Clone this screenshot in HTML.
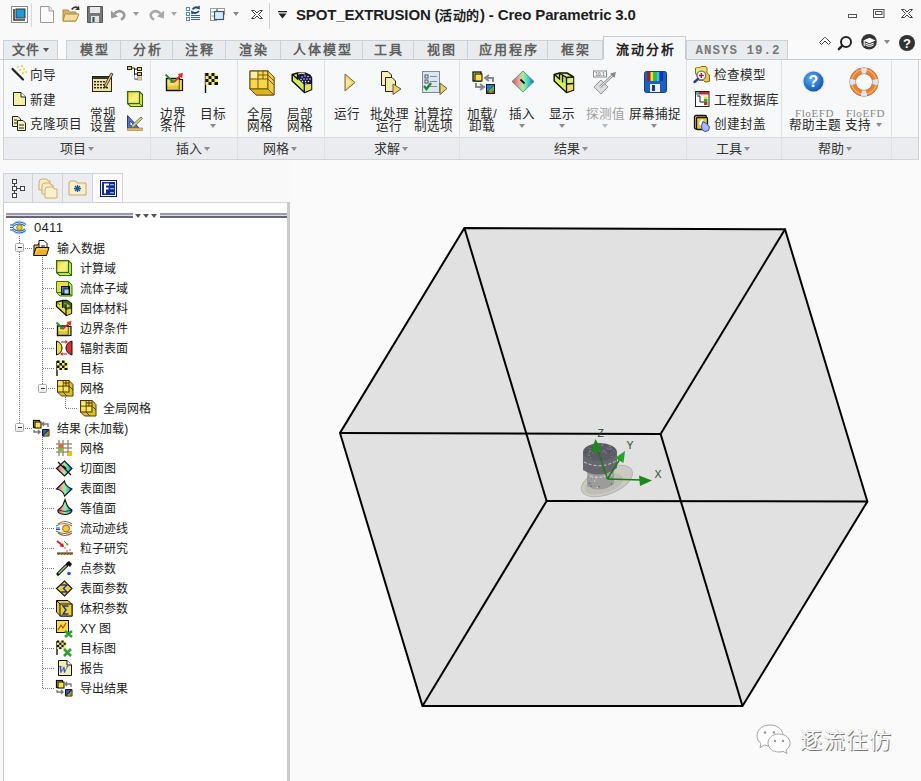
<!DOCTYPE html>
<html lang="zh-CN"><head><meta charset="utf-8">
<style>
*{margin:0;padding:0;box-sizing:border-box}
html,body{width:921px;height:781px;overflow:hidden;background:#fafafa;font-family:"Liberation Sans",sans-serif;font-size:12px;color:#222}
.a{position:absolute}
svg{position:absolute;overflow:visible}
.tab{position:absolute;top:40px;height:19px;border:1px solid #cdd0d4;border-bottom:none;background:#e9ecef;color:#606060;font-weight:bold;font-size:13px;text-align:center;line-height:18px;letter-spacing:2px;text-indent:2px}
.gl{position:absolute;top:142px;height:14px;line-height:14px;font-size:13px;color:#333;white-space:nowrap}
.dd{display:inline-block;width:0;height:0;border-left:3.5px solid transparent;border-right:3.5px solid transparent;border-top:4px solid #8c8c8c;vertical-align:middle;margin-left:2px;position:relative;top:-1px}
.vs{position:absolute;width:1px;background:#dfe2e5}
.t{position:absolute;white-space:nowrap;font-size:12.6px;color:#2a2a2a;line-height:12px}
.c2{text-align:center;line-height:12px}
.tr{position:absolute;white-space:nowrap;font-size:12px;color:#222;line-height:14px}
.dotv{position:absolute;width:1px;background:repeating-linear-gradient(to bottom,#7a7a7a 0 1px,transparent 1px 2px)}
.doth{position:absolute;height:1px;background:repeating-linear-gradient(to right,#7a7a7a 0 1px,transparent 1px 2px)}
.ar{position:absolute;width:0;height:0;border-left:3.5px solid transparent;border-right:3.5px solid transparent;border-top:4px solid #888}
.box{position:absolute;width:9px;height:9px;border:1px solid #a8a8a8;border-radius:1.5px;background:linear-gradient(#fff,#e8e8e8);z-index:2}
.box:after{content:"";position:absolute;left:1.5px;top:3px;width:4px;height:1px;background:#333}
</style></head><body>

<!-- title bar -->
<div class="a" style="left:0;top:0;width:921px;height:40px;background:#f9f9fa"></div>
<div class="a" style="left:296px;top:6px;font-size:15px;font-weight:bold;color:#1e1e24;line-height:18px;white-space:nowrap;letter-spacing:-0.15px">SPOT_EXTRUSION (<span style="font-size:13px;letter-spacing:0.5px">活动的</span>) - Creo Parametric 3.0</div>

<!-- tabs -->
<div class="a" style="left:0;top:59px;width:921px;height:1px;background:#c6c9cd"></div>
<div class="tab" style="left:3px;width:55px;letter-spacing:1px;text-indent:-1px">文件<span class="dd" style="border-top-color:#555;margin-left:3px"></span></div>
<div class="tab" style="left:66px;width:55px">模型</div>
<div class="tab" style="left:120px;width:53px">分析</div>
<div class="tab" style="left:172px;width:54px">注释</div>
<div class="tab" style="left:225px;width:56px">渲染</div>
<div class="tab" style="left:280px;width:83px">人体模型</div>
<div class="tab" style="left:362px;width:52px">工具</div>
<div class="tab" style="left:413px;width:55px">视图</div>
<div class="tab" style="left:467px;width:81px">应用程序</div>
<div class="tab" style="left:547px;width:56px">框架</div>
<div class="tab" style="left:603px;top:36px;height:24px;width:83px;background:#f7f8f9;color:#222;line-height:26px;border-color:#c6c9cd">流动分析</div>
<div class="tab" style="left:686px;width:102px;font-family:'Liberation Mono',monospace;font-size:12.5px;letter-spacing:1px;color:#7a7a7a;line-height:21px;text-indent:2px">ANSYS 19.2</div>

<!-- ribbon -->
<div class="a" style="left:3px;top:60px;width:916px;height:77px;background:#f7f8f9;border-left:1px solid #cfd2d6;border-right:1px solid #cfd2d6"></div>
<div class="a" style="left:603px;top:59px;width:83px;height:1px;background:#f7f8f9"></div>
<div class="a" style="left:3px;top:137px;width:916px;height:23px;background:#eaecef;border:1px solid #cfd2d6;border-top-color:#d8dbde"></div>
<div class="vs" style="left:150px;top:60px;height:99px"></div>
<div class="vs" style="left:237px;top:60px;height:99px"></div>
<div class="vs" style="left:324px;top:60px;height:99px"></div>
<div class="vs" style="left:459px;top:60px;height:99px"></div>
<div class="vs" style="left:686px;top:60px;height:99px"></div>
<div class="vs" style="left:781px;top:60px;height:99px"></div>
<div class="vs" style="left:891px;top:60px;height:99px"></div>

<div class="gl" style="left:60px">项目<span class="dd"></span></div>
<div class="gl" style="left:176px">插入<span class="dd"></span></div>
<div class="gl" style="left:263px">网格<span class="dd"></span></div>
<div class="gl" style="left:374px">求解<span class="dd"></span></div>
<div class="gl" style="left:554px">结果<span class="dd"></span></div>
<div class="gl" style="left:716px">工具<span class="dd"></span></div>
<div class="gl" style="left:818px">帮助<span class="dd"></span></div>

<!-- ribbon texts -->
<div class="t" style="left:30px;top:69px">向导</div>
<div class="t" style="left:30px;top:94px">新建</div>
<div class="t" style="left:30px;top:118px">克隆项目</div>
<div class="t c2" style="left:90px;top:108px;width:26px">常规<br>设置</div>
<div class="t c2" style="left:160px;top:108px;width:26px">边界<br>条件</div>
<div class="t c2" style="left:200px;top:108px;width:26px">目标<br><span class="dd" style="margin:0"></span></div>
<div class="t c2" style="left:247px;top:108px;width:26px">全局<br>网格</div>
<div class="t c2" style="left:287px;top:108px;width:26px">局部<br>网格</div>
<div class="t c2" style="left:334px;top:108px;width:26px">运行</div>
<div class="t c2" style="left:370px;top:108px;width:38px">批处理<br>运行</div>
<div class="t c2" style="left:414px;top:108px;width:38px">计算控<br>制选项</div>
<div class="t c2" style="left:466px;top:108px;width:32px">加载/<br>卸载</div>
<div class="t c2" style="left:509px;top:108px;width:26px">插入<br><span class="dd" style="margin:0"></span></div>
<div class="t c2" style="left:549px;top:108px;width:26px">显示<br><span class="dd" style="margin:0"></span></div>
<div class="t c2" style="left:586px;top:108px;width:38px;color:#a0a0a0">探测值<br><span class="dd" style="margin:0;border-top-color:#bbb"></span></div>
<div class="t c2" style="left:629px;top:108px;width:50px">屏幕捕捉<br><span class="dd" style="margin:0"></span></div>
<div class="t" style="left:714px;top:69px">检查模型</div>
<div class="t" style="left:714px;top:94px">工程数据库</div>
<div class="t" style="left:714px;top:118px">创建封盖</div>
<div class="t" style="left:795px;top:108px;font-family:'Liberation Serif',serif;font-size:11px;line-height:11px;color:#888;letter-spacing:0.6px">FloEFD</div>
<div class="t" style="left:789px;top:119px">帮助主题</div>
<div class="t" style="left:846px;top:108px;font-family:'Liberation Serif',serif;font-size:11px;line-height:11px;color:#888;letter-spacing:0.6px">FloEFD</div>
<div class="t" style="left:845px;top:119px">支持<span class="dd" style="margin-left:5px"></span></div>

<!-- panel area -->
<div class="a" style="left:0;top:160px;width:290px;height:621px;background:#f9f9f9"></div>
<div class="a" style="left:3px;top:173px;width:30px;height:30px;background:#ebedf0;border:1px solid #cfd2d6;border-bottom:none"></div>
<div class="a" style="left:32px;top:173px;width:31px;height:30px;background:#ebedf0;border:1px solid #cfd2d6;border-bottom:none"></div>
<div class="a" style="left:62px;top:173px;width:31px;height:30px;background:#ebedf0;border:1px solid #cfd2d6;border-bottom:none"></div>
<div class="a" style="left:92px;top:173px;width:31px;height:30px;background:#fbfbfb;border:1px solid #cfd2d6;border-bottom:none"></div>
<div class="a" style="left:3px;top:202px;width:287px;height:579px;background:#fff;border-left:1px solid #c9c9c9;border-top:1px solid #cfd2d6"></div>
<div class="a" style="left:122px;top:202px;width:167px;height:1px;background:#cfd2d6"></div>
<div class="a" style="left:287px;top:202px;width:3px;height:579px;background:#cbcbcb"></div>
<div class="a" style="left:6px;top:213px;width:127px;height:5px;background:linear-gradient(#9a9aaa 0 2px,#dcdce8 2px 3px,#66667a 3px 5px)"></div>
<div class="a" style="left:160px;top:213px;width:127px;height:5px;background:linear-gradient(#9a9aaa 0 2px,#dcdce8 2px 3px,#66667a 3px 5px)"></div>
<div class="ar" style="left:134.5px;top:214px;border-top-color:#555"></div>
<div class="ar" style="left:142.5px;top:214px;border-top-color:#555"></div>
<div class="ar" style="left:150.5px;top:214px;border-top-color:#555"></div>


<!-- title icons -->
<svg style="left:11px;top:6px" width="17" height="17"><rect x="0.5" y="0.5" width="16" height="16" fill="#fff" stroke="#888"/><path d="M3 3 V14 H14" fill="none" stroke="#333" stroke-width="1.6"/><rect x="5" y="3" width="9" height="9" fill="#1e9ad8" stroke="#333" stroke-width="1"/></svg>
<div class="a" style="left:31px;top:3px;width:1px;height:24px;background:#d8d8d8"></div>
<svg style="left:40px;top:6px" width="14" height="17"><path d="M0.5 0.5 H9 L13.5 5 V16.5 H0.5 Z" fill="#fbfbfb" stroke="#9a9a9a"/><path d="M9 0.5 V5 H13.5" fill="#e8e8e8" stroke="#9a9a9a"/></svg>
<svg style="left:62px;top:5px" width="18" height="17"><path d="M1 5 H6 L7.5 7 H14 V16 H1 Z" fill="#d9b36a" stroke="#b08a40"/><path d="M3 9 H17 L14 16 H1 Z" fill="#f3dca0" stroke="#b08a40"/><path d="M9 4 Q12 0 16 2 L17 0.5 L17.5 5 L13 5 L15 3.5 Q12 2 10.5 5" fill="#333"/></svg>
<svg style="left:87px;top:6px" width="16" height="17"><path d="M0.5 0.5 H15.5 V16.5 H0.5 Z" fill="#777" stroke="#555"/><rect x="3" y="1" width="10" height="6" fill="#e8e8e8"/><rect x="4" y="10" width="8" height="6.5" fill="#dde4ea"/><rect x="5.5" y="11" width="2" height="5" fill="#444"/></svg>
<svg style="left:110px;top:8px" width="17" height="13"><path d="M4.5 5.5 Q9 1.5 13 4.5 Q16.5 8 11 11.8" fill="none" stroke="#9a9a9a" stroke-width="2.6"/><path d="M0.8 2.5 L1.2 10.5 L8 8.5 Z" fill="#9a9a9a"/></svg>
<div class="ar" style="left:133px;top:12px;border-top-color:#999"></div>
<svg style="left:148px;top:8px" width="17" height="13"><path d="M12.5 5.5 Q8 1.5 4 4.5 Q0.5 8 6 11.8" fill="none" stroke="#a8a8a8" stroke-width="2.6"/><path d="M16.2 2.5 L15.8 10.5 L9 8.5 Z" fill="#a8a8a8"/></svg>
<div class="ar" style="left:171px;top:12px;border-top-color:#aaa"></div>
<svg style="left:185px;top:5px" width="17" height="17"><g fill="none" stroke="#5a8aa8" stroke-width="1"><rect x="1.5" y="2.5" width="3" height="3"/><rect x="1.5" y="7.5" width="3" height="3"/><rect x="1.5" y="12.5" width="3" height="3"/></g><g stroke="#4a6070" stroke-width="1"><line x1="6" y1="10.5" x2="15" y2="10.5"/><line x1="6" y1="12.5" x2="15" y2="12.5"/><line x1="6" y1="14.5" x2="15" y2="14.5"/></g><path d="M7.5 4.5 Q10 1 13.5 3" fill="none" stroke="#1a4a78" stroke-width="1.8"/><path d="M15 4.5 L14.5 0.5 L11 3 Z" fill="#1a4a78"/><path d="M14 6 Q11.5 9 8 7.5" fill="none" stroke="#1a4a78" stroke-width="1.8"/><path d="M6 5.5 L6.5 9.5 L10 7.5 Z" fill="#1a4a78"/></svg>
<svg style="left:209px;top:7px" width="17" height="15"><g fill="#fff" stroke="#999" stroke-width="1"><rect x="1.5" y="1.5" width="6" height="12"/><rect x="8.5" y="1.5" width="7" height="6"/></g><path d="M1.5 5 H7.5 M1.5 9 H5" stroke="#999"/><rect x="5.5" y="4.5" width="9" height="8" fill="#d8ecf8" stroke="#3a5a70" stroke-width="1.2"/></svg>
<div class="ar" style="left:233px;top:12px;border-top-color:#888;border-left-width:3.5px;border-right-width:3.5px;border-top-width:4px"></div>
<svg style="left:250.5px;top:9.5px" width="13" height="10"><path d="M0.5 0.5 H3.5 L6 3 L8.5 0.5 H11.5 L7.5 4.5 L11.5 8.5 H8.5 L6 6 L3.5 8.5 H0.5 L4.5 4.5 Z" fill="#fff" stroke="#444" stroke-width="1" stroke-linejoin="miter"/></svg>
<div class="a" style="left:269px;top:3px;width:1px;height:26px;background:#d0d0d0"></div>
<svg style="left:278px;top:11px" width="9" height="8"><rect x="0" y="0" width="9" height="1.3" fill="#222"/><path d="M0.5 2.5 H8.5 L4.5 7.5 Z" fill="#222"/></svg>
<!-- window controls -->
<svg style="left:848px;top:14px" width="10" height="4"><rect x="0.5" y="0.5" width="8" height="3" fill="#fff" stroke="#555"/></svg>
<svg style="left:873px;top:9px" width="12" height="9"><rect x="0.5" y="0.5" width="10.5" height="8" fill="none" stroke="#555"/><rect x="2.5" y="2.5" width="6.5" height="3" fill="none" stroke="#555"/></svg>
<svg style="left:900.5px;top:9px" width="13" height="10"><path d="M0.5 0.5 H3.5 L6 3 L8.5 0.5 H11.5 L7.5 4.5 L11.5 8.5 H8.5 L6 6 L3.5 8.5 H0.5 L4.5 4.5 Z" fill="#fff" stroke="#444" stroke-width="1" stroke-linejoin="miter"/></svg>
<!-- top right tools -->
<svg style="left:819px;top:37px" width="12" height="8"><path d="M0.5 5.5 L5.5 0.5 H6.5 L11.5 5.5 L9.5 7.5 L6 4 L2.5 7.5 Z" fill="#fff" stroke="#444" stroke-width="1"/></svg>
<svg style="left:837px;top:35px" width="17" height="17"><circle cx="9" cy="7" r="5" fill="#fff" stroke="#222" stroke-width="2"/><line x1="5.3" y1="10.7" x2="1.8" y2="14.2" stroke="#222" stroke-width="2.4" stroke-linecap="round"/></svg>
<svg style="left:861px;top:34px" width="17" height="17"><circle cx="8" cy="7.7" r="7.8" fill="#333"/><path d="M2.2 6.5 L8.5 3.8 L14.5 6.5 L8.5 9.2 Z" fill="#fff"/><path d="M4.5 8.5 V11.5 Q8.5 14.2 12.5 11.5 V8.5 L8.5 10.3 Z" fill="#fff"/><path d="M5 10.5 Q8.5 12.5 12 10.5" stroke="#333" stroke-width="0.8" fill="none"/><line x1="3.2" y1="7" x2="3.2" y2="12" stroke="#fff" stroke-width="1.1"/></svg>
<div class="ar" style="left:884px;top:40px;border-top-color:#888;border-left-width:3.5px;border-right-width:3.5px;border-top-width:4px"></div>
<svg style="left:899px;top:35px" width="17" height="17"><circle cx="8" cy="8" r="8" fill="#333"/><text x="8" y="12.5" text-anchor="middle" font-family="Liberation Sans" font-weight="bold" font-size="13" fill="#fff">?</text></svg>

<!-- ribbon icons -->
<svg style="left:10px;top:64px" width="18" height="18"><line x1="2.5" y1="5" x2="13" y2="15.5" stroke="#222" stroke-width="2.2" stroke-linecap="round"/><g fill="#e8dc60"><rect x="7" y="2" width="2" height="2"/><rect x="11" y="1" width="2" height="2"/><rect x="9" y="5" width="2" height="2"/><rect x="13" y="4" width="2" height="2"/><rect x="12" y="8" width="2" height="2"/><rect x="15" y="7" width="2" height="2"/></g></svg>
<svg style="left:13px;top:92px" width="13" height="15"><path d="M0.5 0.5 H8 L12.5 5 V13.5 H0.5 Z" fill="#f5f0a8" stroke="#222"/><path d="M8 0.5 V5 H12.5" fill="#fff" stroke="#222"/></svg>
<svg style="left:12px;top:116px" width="15" height="15"><path d="M0.5 0.5 H6 L8.5 3 V10.5 H0.5 Z" fill="#f5f0b8" stroke="#222"/><path d="M5.5 4.5 H11 L13.5 7 V14.5 H5.5 Z" fill="#f5f0b8" stroke="#222"/><g stroke="#222"><line x1="2" y1="4" x2="5" y2="4"/><line x1="2" y1="7" x2="5" y2="7"/><line x1="7" y1="9" x2="12" y2="9"/><line x1="7" y1="12" x2="12" y2="12"/></g></svg>
<svg style="left:92px;top:70px" width="22" height="22"><rect x="0.5" y="6.5" width="19" height="15" fill="#efe3a8" stroke="#222"/><rect x="1" y="7" width="18" height="2" fill="#333"/><g fill="#222"><rect x="2" y="11" width="2" height="1.4"/><rect x="5" y="11" width="2" height="1.4"/><rect x="8" y="11" width="2" height="1.4"/><rect x="11" y="11" width="2" height="1.4"/><rect x="14" y="11" width="2" height="1.4"/><rect x="2" y="14" width="2" height="1.4"/><rect x="5" y="14" width="2" height="1.4"/><rect x="8" y="14" width="2" height="1.4"/><rect x="11" y="14" width="2" height="1.4"/><rect x="2" y="17" width="2" height="1.4"/><rect x="5" y="17" width="2" height="1.4"/><rect x="8" y="17" width="2" height="1.4"/><rect x="11" y="17" width="2" height="1.4"/><rect x="14" y="17" width="2" height="1.4"/></g><path d="M12 16 L19 3 L21 4 L14 17 Z" fill="#e8c070" stroke="#222" stroke-width="0.8"/><path d="M12 16 L13 18 L14 17Z" fill="#222"/></svg>
<svg style="left:127px;top:66px" width="16" height="15"><g fill="#e0d060" stroke="#222" stroke-width="1"><rect x="0.5" y="0.5" width="4" height="3"/><rect x="10.5" y="1.5" width="4" height="3"/><rect x="10.5" y="6.5" width="4" height="3"/></g><rect x="10.5" y="11" width="4" height="3" fill="#e8d870" stroke="#aaa"/><path d="M4.5 2 H7.5 V13 H10.5 M7.5 3 H10.5 M7.5 8 H10.5" fill="none" stroke="#222"/><path d="M7.5 9 V12.5 H10.5" fill="none" stroke="#aaa"/></svg>
<svg style="left:127px;top:91px" width="17" height="17"><defs><linearGradient id="yb" x1="0" y1="0" x2="1" y2="1"><stop offset="0" stop-color="#f8d020"/><stop offset="0.5" stop-color="#f8f080"/><stop offset="1" stop-color="#e0f060"/></linearGradient></defs><path d="M0.5 0.5 H12.5 L15.5 3.5 V15.5 H3.5 L0.5 12.5 Z" fill="#e8e040" stroke="#2a6a10" stroke-width="1.1"/><rect x="0.7" y="0.7" width="11.8" height="11.8" fill="url(#yb)" stroke="#2a6a10" stroke-width="1.2"/><path d="M12.5 12.5 L15.5 15.5" stroke="#2a6a10"/></svg>
<svg style="left:127px;top:115px" width="16" height="16"><path d="M0.5 0.5 V13 H12 Z" fill="#5878c8" stroke="#2a3a88"/><path d="M3 6 V10.5 H7.5 Z" fill="#fff" stroke="#2a3a88" stroke-width="0.8"/><path d="M4 11 L14 2 L15.5 3.5 L6 12.5 Z" fill="#d8d888" stroke="#5a5a40" stroke-width="0.8"/><rect x="0.5" y="13" width="15" height="2.5" fill="#e8b860" stroke="#b07830" stroke-width="0.6"/></svg>

<svg style="left:164px;top:72px" width="20" height="20"><path d="M2.5 6.5 H15.5 V18.5 H2.5 Z" fill="#e8c838" stroke="#111" stroke-width="1.4"/><rect x="3.5" y="7.5" width="11" height="6" fill="#f8e070"/><path d="M15.5 7.5 H18.5 V18.5 H15.5" fill="#f0d858" stroke="#111" stroke-width="1.2"/><path d="M1.5 2.5 L9 10" stroke="#2a8a2a" stroke-width="1.8"/><path d="M10 11 L5.5 10.5 L9.5 6.5 Z" fill="#2a8a2a"/><path d="M10 10 L17 3" stroke="#d83020" stroke-width="1.8"/><path d="M19 1 L13.5 2 L18 6.5 Z" fill="#d83020"/></svg>
<svg style="left:204px;top:71.5px" width="15" height="22"><line x1="1.5" y1="1" x2="1.5" y2="21" stroke="#111" stroke-width="1.4"/><path d="M1.5 1 H11 L14 3 V13 H1.5 Z" fill="#f0f070"/><g fill="#111"><rect x="1.5" y="1" width="3" height="3"/><rect x="7.5" y="1" width="3" height="3"/><rect x="4.5" y="4" width="3" height="3"/><rect x="10.5" y="4" width="3.5" height="3"/><rect x="1.5" y="7" width="3" height="3"/><rect x="7.5" y="7" width="3" height="3"/><rect x="4.5" y="10" width="3" height="3"/><rect x="10.5" y="10" width="3.5" height="3"/></g></svg>
<svg style="left:249px;top:69.5px" width="26" height="26"><path d="M1 1 H19 L25 7 V25 H7 L1 19 Z" fill="#e8c020" stroke="#5a4a10"/><rect x="1" y="1" width="18" height="18" fill="#f8d848" stroke="#5a4a10"/><path d="M19 1 L25 7 V25 L19 19 Z" fill="#f0d040" stroke="#5a4a10" stroke-width="0.8"/><path d="M1 19 L7 25 H25 L19 19Z" fill="#e0b020" stroke="#5a4a10" stroke-width="0.8"/><g stroke="#6a5010" stroke-width="0.9"><line x1="9" y1="1" x2="9" y2="19"/><line x1="1" y1="9" x2="19" y2="9"/><line x1="14" y1="1" x2="14" y2="9"/><line x1="9" y1="5" x2="19" y2="5"/><line x1="19" y1="9" x2="25" y2="15"/><line x1="19" y1="5" x2="25" y2="11"/></g><rect x="2" y="2" width="6" height="6" fill="#fbeeb0"/></svg>
<svg style="left:287px;top:68px" width="30" height="28"><path d="M5.2 6.5 L10.5 5 L18.5 5.2 L23 7.5 L24.5 10 V21.5 L17.5 24.5 L5.2 13 Z" fill="#d8ec58" stroke="#111" stroke-width="1.5" stroke-linejoin="round"/><path d="M6 7 L10.5 11 V5.5" fill="none" stroke="#111" stroke-width="1.4"/><path d="M11 6 L18 5.5 L22.8 7.8 L24.2 10 V16.5 L17.5 17 L11 11 Z" fill="#1a1a50"/><path d="M17.5 16.5 L24.2 16 V21.3 L17.5 24 Z" fill="#e8dc58"/><path d="M17.3 15 V24.5" stroke="#111" stroke-width="1.3"/><g fill="#fff"><circle cx="15" cy="9" r="0.7"/><circle cx="18" cy="8" r="0.7"/><circle cx="21" cy="8.5" r="0.7"/><circle cx="14" cy="11.5" r="0.7"/><circle cx="17" cy="11" r="0.7"/><circle cx="20" cy="11" r="0.7"/><circle cx="23" cy="11" r="0.7"/><circle cx="15.5" cy="13.5" r="0.7"/><circle cx="18.5" cy="13.5" r="0.7"/><circle cx="21.5" cy="13.5" r="0.7"/><circle cx="19" cy="15.5" r="0.6"/></g><path d="M11 6 Q15 4.5 18 6" fill="none" stroke="#f8f0a0" stroke-width="1"/></svg>
<svg style="left:344px;top:72.5px" width="12" height="19"><path d="M1 1 L11 9.5 L1 18 Z" fill="#e8d070" stroke="#7a6a3a"/><path d="M2 4 L8 9.5 L2 15Z" fill="#f5e8a0"/></svg>
<svg style="left:381px;top:71px" width="21" height="25"><path d="M0.5 0.5 H7 L10.5 4 V14.5 H0.5 Z" fill="#f5f0b8" stroke="#222"/><path d="M4.5 6.5 H11 L14.5 10 V20.5 H4.5 Z" fill="#f2ecb0" stroke="#222"/><path d="M12 13 L20 18 L12 23.5 Z" fill="#e8d070" stroke="#6a5a30"/></svg>
<svg style="left:422px;top:71px" width="26" height="25"><rect x="0.5" y="0.5" width="17" height="21" fill="#dbe6f0" stroke="#7a8a98"/><g fill="none" stroke="#556"><rect x="3" y="4" width="3" height="3"/><rect x="3" y="9" width="3" height="3"/></g><g stroke="#889"><line x1="8" y1="5.5" x2="15" y2="5.5"/><line x1="8" y1="10.5" x2="15" y2="10.5"/><line x1="8" y1="15.5" x2="15" y2="15.5"/></g><path d="M2 15 L4.5 18 L9 12" fill="none" stroke="#1a8a2a" stroke-width="2.4"/><path d="M18 12 L25 17.5 L18 23.5 Z" fill="#e8d070" stroke="#6a5a30"/></svg>

<svg style="left:472px;top:71px" width="25" height="24"><rect x="1" y="1" width="8" height="9" fill="#f0d030" stroke="#111" stroke-width="1.3"/><rect x="3" y="3" width="7" height="7" fill="#f8e050" stroke="#111"/><rect x="14" y="13" width="9" height="10" fill="#1a1a1a"/><path d="M15 22 L22 14 V22 Z" fill="#e82020"/><path d="M15 14 H22 L15 21 Z" fill="#2080d0"/><path d="M16 20 L22 15 V19 L19 22 Z" fill="#40c040"/><path d="M17 4 L13 7 L17 10 M13 7 H21 V11" fill="none" stroke="#888" stroke-width="2"/><path d="M8 13 L12 16 L8 19 M12 16 H4 V12" fill="none" stroke="#888" stroke-width="2"/></svg>
<svg style="left:511px;top:70px" width="24" height="23"><defs><linearGradient id="rg" x1="0" y1="0" x2="1" y2="0"><stop offset="0" stop-color="#e04848"/><stop offset="0.3" stop-color="#f0a0a0"/><stop offset="0.5" stop-color="#a0f0a0"/><stop offset="0.75" stop-color="#40d0c0"/><stop offset="1" stop-color="#3050e0"/></linearGradient></defs><path d="M1 11.5 L12 1 L23 11.5 L12 22 Z" fill="url(#rg)" stroke="#3a8a5a" stroke-width="0.8"/><line x1="9.5" y1="9.5" x2="13.5" y2="13.5" stroke="#111" stroke-width="1.8"/></svg>
<svg style="left:549px;top:68px" width="30" height="28"><path d="M5.2 6.5 L10.5 5 L18 5 L24.5 9 V22 L17.5 24.5 L5.2 13 Z" fill="#dcee60" stroke="#111" stroke-width="1.5" stroke-linejoin="round"/><path d="M6 7 L10.5 11 V5.5" fill="none" stroke="#111" stroke-width="1.4"/><path d="M13.5 7 L17.5 9.5 V16 L13.5 14.5 Z" fill="#b8e070"/><path d="M17.5 9.5 L24.2 9 V15.5 L17.5 16 Z" fill="#d8ec70"/><path d="M17.5 16 L24.2 15.5 V21.8 L17.5 24 Z" fill="#eedd60"/><path d="M13.5 6.5 V14.5 M13.5 7 L17.5 9.5 L24.5 9 M17.5 9.5 V24.5 M17.5 16 L24.5 15.5 M10.5 5.5 L13.5 7" fill="none" stroke="#111" stroke-width="1.3"/></svg>
<svg style="left:593px;top:70px" width="25" height="25"><rect x="0.5" y="1" width="13" height="6" fill="#fff" stroke="#888"/><text x="7" y="6" text-anchor="middle" font-family="Liberation Sans" font-weight="bold" font-size="5" fill="#777">10.1</text><path d="M1 17 L8 10 L15 17 L8 24 Z" fill="#ddd" stroke="#999"/><path d="M7 17 L20 5" stroke="#999" stroke-width="2.6"/><path d="M7 17 L20 5" stroke="#eee" stroke-width="1"/><path d="M23 2 L17 3.5 L21.5 8 Z" fill="#888"/></svg>
<svg style="left:644px;top:71px" width="24" height="22"><rect x="0.5" y="0.5" width="22" height="21" rx="2" fill="#1a60c0" stroke="#104090"/><rect x="3" y="1" width="3.5" height="9" fill="#a02020"/><rect x="6.5" y="1" width="3" height="9" fill="#f0e020"/><rect x="9.5" y="1" width="3" height="9" fill="#30c030"/><rect x="12.5" y="1" width="3" height="9" fill="#30d0c0"/><rect x="15.5" y="1" width="3.5" height="9" fill="#1030c0"/><rect x="6" y="13" width="10" height="8" fill="#eef"/><rect x="8" y="14" width="3" height="6" fill="#1a3a90"/></svg>

<svg style="left:690px;top:62px" width="24" height="24"><path d="M5.5 6 L10 5.5 L11 4.5 H16 L17 6 V11 L19.5 13 V19.5 L15 20 L13.5 18.5 H9 L5.5 11 Z" fill="#e8c838" stroke="#8a6a18" stroke-width="1"/><path d="M6 6.5 L10 6 L12 9 L9 12 L6 10.5Z" fill="#e8ec80"/><path d="M11 5 H16 L16.5 9 L12 9 Z" fill="#f0e060"/><circle cx="11.3" cy="13.5" r="4.3" fill="#fff" stroke="#7a7a8a" stroke-width="1.3"/><path d="M11.3 11 V16 M8.8 13.5 H13.8" stroke="#a02030" stroke-width="1.4"/><line x1="8" y1="17" x2="4.5" y2="20" stroke="#2a3aa0" stroke-width="2.4" stroke-linecap="round"/></svg>
<svg style="left:695px;top:91px" width="15" height="16"><rect x="0.5" y="0.5" width="13.5" height="15" fill="#fff" stroke="#222"/><rect x="1" y="1" width="13" height="2.5" fill="#d02828"/><rect x="1" y="1" width="2.5" height="2.5" fill="#30c0c0"/><path d="M2 5 H5 V11 H9" fill="none" stroke="#222"/><rect x="9" y="5.5" width="3.5" height="3" fill="#e8e020"/><rect x="9" y="8" width="3.5" height="3" fill="#30b030"/><rect x="9" y="11" width="3.5" height="3" fill="#d02828"/></svg>
<svg style="left:690px;top:111px" width="24" height="24"><rect x="4.5" y="4.5" width="12" height="13.5" rx="1.5" fill="#e8d040" stroke="#111" stroke-width="1.3"/><rect x="6.5" y="6.5" width="11" height="12" rx="1" fill="#e8c830" stroke="#111" stroke-width="1.3"/><path d="M9 13 Q9 8.5 13 8.5 L14 10 L11 15 Z" fill="#fff"/><path d="M13 10.5 L16.5 12.5 L19.5 16 L18.5 19.5 L15 20.5 L12 18.5 L11.5 14.5 Z" fill="#a8b8f8" stroke="#3a48c8" stroke-width="1"/></svg>
<svg style="left:802px;top:70px" width="24" height="24"><defs><radialGradient id="bq" cx="0.4" cy="0.35" r="0.7"><stop offset="0" stop-color="#60b0f8"/><stop offset="1" stop-color="#1050a8"/></radialGradient></defs><circle cx="11.5" cy="11.5" r="11" fill="#d8e4f0"/><circle cx="11.5" cy="11.5" r="10" fill="url(#bq)"/><text x="11.5" y="17" text-anchor="middle" font-family="Liberation Sans" font-weight="bold" font-size="16" fill="#fff">?</text></svg>
<svg style="left:849px;top:67px" width="30" height="30"><circle cx="15" cy="15" r="11.3" fill="none" stroke="#a07050" stroke-width="6.4"/><circle cx="15" cy="15" r="11.3" fill="none" stroke="#f08030" stroke-width="5.2"/><circle cx="15" cy="15" r="12.3" fill="none" stroke="#f8b070" stroke-width="1.2"/><g stroke="#d8e8f8" stroke-width="5.4"><path d="M12.46 3.99 A11.3 11.3 0 0 1 17.54 3.99" fill="none"/><path d="M26.01 12.46 A11.3 11.3 0 0 1 26.01 17.54" fill="none"/><path d="M17.54 26.01 A11.3 11.3 0 0 1 12.46 26.01" fill="none"/><path d="M3.99 17.54 A11.3 11.3 0 0 1 3.99 12.46" fill="none"/></g></svg>


<!-- tree -->
<div class="tr" style="left:34px;top:221px;font-size:13px;letter-spacing:0.3px">0411</div>
<div class="tr" style="left:57px;top:242px">输入数据</div>
<div class="tr" style="left:80px;top:262px">计算域</div>
<div class="tr" style="left:80px;top:282px">流体子域</div>
<div class="tr" style="left:80px;top:302px">固体材料</div>
<div class="tr" style="left:80px;top:322px">边界条件</div>
<div class="tr" style="left:80px;top:342px">辐射表面</div>
<div class="tr" style="left:80px;top:362px">目标</div>
<div class="tr" style="left:80px;top:382px">网格</div>
<div class="tr" style="left:103px;top:402px">全局网格</div>
<div class="tr" style="left:57px;top:422px">结果 (未加载)</div>
<div class="tr" style="left:80px;top:442px">网格</div>
<div class="tr" style="left:80px;top:462px">切面图</div>
<div class="tr" style="left:80px;top:482px">表面图</div>
<div class="tr" style="left:80px;top:502px">等值面</div>
<div class="tr" style="left:80px;top:522px">流动迹线</div>
<div class="tr" style="left:80px;top:542px">粒子研究</div>
<div class="tr" style="left:80px;top:562px">点参数</div>
<div class="tr" style="left:80px;top:582px">表面参数</div>
<div class="tr" style="left:80px;top:602px">体积参数</div>
<div class="tr" style="left:80px;top:622px">XY 图</div>
<div class="tr" style="left:80px;top:642px">目标图</div>
<div class="tr" style="left:80px;top:662px">报告</div>
<div class="tr" style="left:80px;top:682px">导出结果</div>
<div class="dotv" style="left:19px;top:236px;height:192px"></div>
<div class="dotv" style="left:42px;top:257px;height:131px"></div>
<div class="dotv" style="left:42px;top:437px;height:251px"></div>
<div class="dotv" style="left:65px;top:397px;height:11px"></div>
<div class="doth" style="left:25px;top:248px;width:7px"></div>
<div class="doth" style="left:25px;top:428px;width:7px"></div>
<div class="doth" style="left:48px;top:388px;width:8px"></div>
<div class="doth" style="left:66px;top:408px;width:12px"></div>
<div class="doth" style="left:43px;top:268px;width:12px"></div>
<div class="doth" style="left:43px;top:288px;width:12px"></div>
<div class="doth" style="left:43px;top:308px;width:12px"></div>
<div class="doth" style="left:43px;top:328px;width:12px"></div>
<div class="doth" style="left:43px;top:348px;width:12px"></div>
<div class="doth" style="left:43px;top:368px;width:12px"></div>
<div class="doth" style="left:43px;top:448px;width:12px"></div>
<div class="doth" style="left:43px;top:468px;width:12px"></div>
<div class="doth" style="left:43px;top:488px;width:12px"></div>
<div class="doth" style="left:43px;top:508px;width:12px"></div>
<div class="doth" style="left:43px;top:528px;width:12px"></div>
<div class="doth" style="left:43px;top:548px;width:12px"></div>
<div class="doth" style="left:43px;top:568px;width:12px"></div>
<div class="doth" style="left:43px;top:588px;width:12px"></div>
<div class="doth" style="left:43px;top:608px;width:12px"></div>
<div class="doth" style="left:43px;top:628px;width:12px"></div>
<div class="doth" style="left:43px;top:648px;width:12px"></div>
<div class="doth" style="left:43px;top:668px;width:12px"></div>
<div class="doth" style="left:43px;top:688px;width:12px"></div>
<div class="box" style="left:15px;top:243px"></div>
<div class="box" style="left:15px;top:423px"></div>
<div class="box" style="left:38px;top:384px"></div>


<!-- tree icons -->
<svg style="left:9px;top:220px" width="18" height="15"><g fill="none" stroke="#2a68c0" stroke-width="1.1"><path d="M1 7.5 H4.5"/><path d="M1 5 H4"/><path d="M1 10 H4"/><path d="M3 5 Q10 -1 17 4.5"/><path d="M3 10 Q10 16 17 10.5"/><path d="M4 6.5 Q10 1.5 16 6"/><path d="M4 8.5 Q10 13.5 16 9"/></g><g fill="none" stroke="#a8d8f8" stroke-width="0.9"><path d="M3.5 4 Q10 -2 17 3.5"/><path d="M3.5 11 Q10 17 17 11.5"/></g><circle cx="10.5" cy="7.5" r="2.8" fill="#f0d010" stroke="#6a6020" stroke-width="0.8"/></svg>
<svg style="left:33px;top:240px" width="17" height="17"><path d="M1 5 H5 L6 3 H9 V15 H1 Z" fill="#e8c040" stroke="#111"/><path d="M6 0.5 H11 L14 3.5 V10 H6 Z" fill="#fff" stroke="#111"/><path d="M8 6 H12" stroke="#111"/><path d="M0.5 15.5 L3 7.5 H16 L13.5 15.5 Z" fill="#f0b020" stroke="#111"/><path d="M3 13 L4.5 9 H14" stroke="#f8e080" fill="none"/></svg>
<svg style="left:56px;top:260px" width="17" height="17"><path d="M0.5 0.5 H12.5 L15.5 3.5 V15.5 H3.5 L0.5 12.5 Z" fill="#d8e840" stroke="#2a6a10" stroke-width="1.1"/><rect x="0.7" y="0.7" width="11.8" height="11.8" fill="url(#yb)" stroke="#2a6a10" stroke-width="1.2"/><path d="M12.5 12.5 L15.5 15.5" stroke="#2a6a10"/></svg>
<svg style="left:56px;top:281px" width="17" height="16"><path d="M0.5 0.5 H12.5 L16 4 V15 H4 L0.5 11.5 Z" fill="#c8e040" stroke="#2a7a10"/><rect x="1" y="1" width="11.5" height="10.5" fill="#f0d840"/><path d="M12.5 0.5 V11.5 H0.5 M12.5 11.5 L16 15" fill="none" stroke="#2a7a10"/><rect x="5" y="5" width="9" height="9" fill="#111"/><rect x="6" y="6" width="6" height="6" fill="#3a70d0"/><rect x="8" y="8" width="5" height="5" fill="#b8d0f0" stroke="#111" stroke-width="0.8"/></svg>
<svg style="left:52px;top:296px" width="24" height="24"><path d="M4.5 6 L11 4.5 L15 4.5 L19.5 7.5 V17.5 L14.5 19.5 L4.5 10.5 Z" fill="#e8e040" stroke="#111" stroke-width="1.3" stroke-linejoin="round"/><path d="M11 5 L15 5 L19.2 7.8 V13 L14 14 L10.5 10.5 Z" fill="#3a6a18"/><path d="M14 14 L19.2 13 V17.3 L14.5 19 Z" fill="#e8c848"/><path d="M12 7 L15 8 L18 10 L15 11.5Z" fill="#e8d060"/><path d="M10.5 5 V12 M14 8 V19.5" stroke="#111" stroke-width="1.2" fill="none"/><path d="M5 6.5 L8 9" stroke="#7a4a10"/></svg>
<svg style="left:55px;top:321px" width="18" height="16"><path d="M2.5 5 H13.5 V14.5 H2.5 Z" fill="#e8c838" stroke="#111" stroke-width="1.4"/><rect x="3.5" y="6" width="9" height="4" fill="#f8e070"/><path d="M13.5 5.5 H16 V14.5 H13.5" fill="#f0d858" stroke="#111" stroke-width="1.2"/><path d="M1.5 1.5 L7.5 7.5" stroke="#2a8a2a" stroke-width="1.8"/><path d="M8.5 8.5 L4.5 8 L8 4.5 Z" fill="#2a8a2a"/><path d="M8 8 L14 2" stroke="#d83020" stroke-width="1.6"/><path d="M16.5 0 L11.5 1 L15.5 5 Z" fill="#d83020"/></svg>
<svg style="left:56px;top:340px" width="17" height="16"><path d="M0.5 1 Q6 3 6 8 Q6 13 0.5 15 Z" fill="#e8e040" stroke="#111"/><path d="M16 1 Q10 3 10 8 Q10 13 16 15 Z" fill="#e03030" stroke="#111"/><path d="M5 2 H11" stroke="#d83020" stroke-width="1.2"/><path d="M12 2 L9.5 0 V4 Z" fill="#d83020"/><path d="M11 14 H5" stroke="#d83020" stroke-width="1.2"/><path d="M4 14 L6.5 12 V16 Z" fill="#d83020"/></svg>
<svg style="left:56px;top:360px" width="13" height="16"><line x1="1" y1="1" x2="1" y2="16" stroke="#111" stroke-width="1.4"/><path d="M1 0.5 H9 L12 2.5 V10 H1 Z" fill="#f0f070"/><g fill="#111"><rect x="1" y="0.5" width="2.5" height="2.5"/><rect x="6" y="0.5" width="2.5" height="2.5"/><rect x="3.5" y="3" width="2.5" height="2.5"/><rect x="8.5" y="3" width="2.5" height="2.5"/><rect x="1" y="5.5" width="2.5" height="2.5"/><rect x="6" y="5.5" width="2.5" height="2.5"/><rect x="3.5" y="8" width="2.5" height="2"/><rect x="8.5" y="8" width="3" height="2"/></g></svg>
<svg style="left:57px;top:380px" width="17" height="17"><path d="M0.5 0.5 H12 L16 4.5 V16 H4.5 L0.5 12 Z" fill="#e0c020" stroke="#4a3a10"/><rect x="0.5" y="0.5" width="11.5" height="11.5" fill="#f0d030" stroke="#4a3a10"/><g stroke="#4a3a10"><line x1="6" y1="0.5" x2="6" y2="12"/><line x1="0.5" y1="6" x2="12" y2="6"/><line x1="9" y1="0.5" x2="9" y2="6"/><line x1="6" y1="3" x2="12" y2="3"/><line x1="12" y1="6" x2="16" y2="10"/><line x1="6" y1="12" x2="10" y2="16"/></g><rect x="1.5" y="1.5" width="4" height="4" fill="#f8e880"/><rect x="1.5" y="7" width="4" height="4" fill="#f8e060"/><rect x="7" y="7" width="4" height="4" fill="#f8e060"/></svg>
<svg style="left:80px;top:400px" width="17" height="17"><path d="M0.5 0.5 H12 L16 4.5 V16 H4.5 L0.5 12 Z" fill="#e0c020" stroke="#4a3a10"/><rect x="0.5" y="0.5" width="11.5" height="11.5" fill="#f0d030" stroke="#4a3a10"/><g stroke="#4a3a10"><line x1="6" y1="0.5" x2="6" y2="12"/><line x1="0.5" y1="6" x2="12" y2="6"/><line x1="9" y1="0.5" x2="9" y2="6"/><line x1="6" y1="3" x2="12" y2="3"/><line x1="12" y1="6" x2="16" y2="10"/><line x1="6" y1="12" x2="10" y2="16"/></g><rect x="1.5" y="1.5" width="4" height="4" fill="#f8e880"/><rect x="1.5" y="7" width="4" height="4" fill="#f8e060"/><rect x="7" y="7" width="4" height="4" fill="#f8e060"/></svg>
<svg style="left:33px;top:420px" width="17" height="17"><rect x="0.5" y="0.5" width="6" height="7" fill="#f0c820" stroke="#111" stroke-width="1.2"/><rect x="2" y="2" width="6" height="6" fill="#f8e050" stroke="#111"/><rect x="9" y="9" width="7.5" height="7.5" rx="1" fill="#111"/><path d="M10 16 L16 10 V16 Z" fill="#e02020"/><path d="M10 10 H15 L10 15 Z" fill="#2060c0"/><path d="M11 15 L15.5 11 V14 L13.5 16 Z" fill="#40c040"/><path d="M11 2 L9 4 L11 6 M9 4 H15 V7" fill="none" stroke="#777" stroke-width="1.4"/><path d="M5 10 L7 12 L5 14 M7 12 H1 V10" fill="none" stroke="#777" stroke-width="1.4"/></svg>
<svg style="left:56px;top:440px" width="17" height="17"><g stroke="#8a7a60" stroke-width="1.2"><line x1="0" y1="4" x2="16" y2="4"/><line x1="0" y1="8" x2="16" y2="8"/><line x1="0" y1="12" x2="16" y2="12"/><line x1="3" y1="0" x2="3" y2="16"/><line x1="7" y1="0" x2="7" y2="16"/><line x1="12" y1="0" x2="12" y2="16"/></g><rect x="3" y="4" width="4" height="4" fill="#d07040"/><rect x="3" y="8" width="4" height="4" fill="#80c040"/><rect x="12" y="12" width="4" height="4" fill="#f0c010"/></svg>
<svg style="left:56px;top:460px" width="17" height="17"><path d="M0.5 8.5 L8.5 1 L16 8.5 L8.5 16 Z" fill="url(#rg)" stroke="#111" stroke-width="1.1"/><line x1="2" y1="2" x2="15" y2="15" stroke="#111" stroke-width="1.3"/><line x1="7" y1="6" x2="10" y2="9" stroke="#111" stroke-width="1.8"/></svg>
<svg style="left:56px;top:480px" width="17" height="17"><path d="M0.5 9 L8.5 1 Q9 6 16 9 L8.5 16 Q8 11 0.5 9 Z" fill="url(#rg)" stroke="#111" stroke-width="1.1"/></svg>
<svg style="left:56px;top:499px" width="17" height="17"><path d="M2 11 Q5 9 7 6 L9 0.5 L11 6 Q12 9 16 11 Q16 15 9 15.5 Q1 15 2 11 Z" fill="url(#rg)" stroke="#111" stroke-width="1.1"/><path d="M2 11 Q9 14 16 11" fill="none" stroke="#111" stroke-width="0.8"/></svg>
<svg style="left:56px;top:520px" width="17" height="17"><g fill="none" stroke-width="1.1"><path d="M2 4 Q9 -1 16 4" stroke="#d04040"/><path d="M2 13 Q9 18 16 13" stroke="#d04040"/><path d="M0 6 Q9 1 16 6" stroke="#40a040"/><path d="M0 11 Q9 16 16 11" stroke="#40a040"/><path d="M0 8 H4 M0 9.5 H4" stroke="#2040c0"/></g><circle cx="10" cy="8.5" r="3.5" fill="#f0d020" stroke="#d04040"/></svg>
<svg style="left:56px;top:540px" width="17" height="17"><path d="M1 1 L7 6" stroke="#d02020" stroke-width="1.8"/><path d="M8 7 L3.5 6.5 L7 3 Z" fill="#d02020"/><path d="M8 1 L12 5" stroke="#30a030" stroke-width="1"/><path d="M12.5 5.5 L10 5 L12 3Z" fill="#30a030"/><g fill="#c04040"><circle cx="9" cy="8" r="0.8"/><circle cx="11" cy="11" r="0.8"/><circle cx="14" cy="10" r="0.8"/></g><rect x="1" y="13" width="16" height="2" fill="#e8a040"/><line x1="1" y1="13" x2="17" y2="13" stroke="#222"/><g stroke="#333" stroke-width="0.6"><path d="M2 15 L4 13 M5 15 L7 13 M8 15 L10 13 M11 15 L13 13 M14 15 L16 13"/></g></svg>
<svg style="left:56px;top:560px" width="17" height="17"><path d="M2 14 L11 5" stroke="#111" stroke-width="3.2" stroke-linecap="round"/><path d="M2.5 13.5 L10.5 5.5" stroke="#90d0a0" stroke-width="1.4"/><path d="M10 3 L14 7 L16 4 L13 1 Z" fill="#111"/><circle cx="13" cy="13.5" r="1.8" fill="#2050e0"/></svg>
<svg style="left:56px;top:580px" width="17" height="17"><path d="M0.5 8.5 L8.5 1 L16 8.5 L8.5 16 Z" fill="#f0d030" stroke="#111" stroke-width="1.1"/><path d="M5 5 H11 L7.5 8.5 L11 12 H5" fill="none" stroke="#2030a0" stroke-width="1.4"/></svg>
<svg style="left:56px;top:600px" width="17" height="17"><path d="M0.5 0.5 H12 L16 4.5 V16 H4.5 L0.5 12 Z" fill="#e8c830" stroke="#111"/><rect x="4" y="4" width="12" height="12" fill="#f0d030" stroke="#111"/><path d="M0.5 0.5 L4 4" stroke="#111"/><path d="M12.5 6 H7 L10 10 L7 14 H12.5" fill="none" stroke="#2030a0" stroke-width="1.4"/></svg>
<svg style="left:56px;top:620px" width="18" height="18"><rect x="0.5" y="0.5" width="12" height="12" fill="#f0e040" stroke="#111"/><path d="M2 10 L5 5 L7 8 L10 3" fill="none" stroke="#e03020" stroke-width="1.2"/><path d="M9 11 L16 17 M16 11 L9 17" stroke="#30a030" stroke-width="2.6"/></svg>
<svg style="left:56px;top:640px" width="17" height="17"><line x1="1" y1="1" x2="1" y2="15" stroke="#111" stroke-width="1.4"/><path d="M1 0.5 H8 L10 2 V9 H1 Z" fill="#f0f070"/><g fill="#111"><rect x="1" y="0.5" width="2.2" height="2.2"/><rect x="5.4" y="0.5" width="2.2" height="2.2"/><rect x="3.2" y="2.7" width="2.2" height="2.2"/><rect x="7.6" y="2.7" width="2.2" height="2.2"/><rect x="1" y="4.9" width="2.2" height="2.2"/><rect x="5.4" y="4.9" width="2.2" height="2.2"/><rect x="3.2" y="7.1" width="2.2" height="2"/></g><path d="M8 9 L15 16 M15 9 L8 16" stroke="#30a030" stroke-width="2.6"/></svg>
<svg style="left:56px;top:660px" width="17" height="17"><path d="M2.5 0.5 H11 L15.5 5 V15.5 H2.5 Z" fill="#f5eeb0" stroke="#111"/><path d="M11 0.5 V5 H15.5" fill="#fff" stroke="#111"/><text x="7" y="13" text-anchor="middle" font-family="Liberation Serif" font-style="italic" font-weight="bold" font-size="11" fill="#3050c0">W</text></svg>
<svg style="left:56px;top:680px" width="17" height="17"><rect x="0.5" y="0.5" width="6" height="7" fill="#f0c820" stroke="#111" stroke-width="1.2"/><rect x="2" y="2" width="6" height="6" fill="#f8e050" stroke="#111"/><rect x="9" y="9" width="7.5" height="7.5" rx="1" fill="#111"/><path d="M10 16 L16 10 V16 Z" fill="#e02020"/><path d="M10 10 H15 L10 15 Z" fill="#2060c0"/><path d="M11 15 L15.5 11 V14 L13.5 16 Z" fill="#40c040"/><path d="M11 2 L9 4 L11 6 M9 4 H15 V7" fill="none" stroke="#777" stroke-width="1.4"/><path d="M5 10 L7 12 L5 14 M7 12 H1 V10" fill="none" stroke="#777" stroke-width="1.4"/></svg>


<!-- panel tab icons -->
<svg style="left:11px;top:178px" width="16" height="20"><g fill="#fff" stroke="#444" stroke-width="1"><rect x="1.5" y="1.5" width="4" height="4"/><rect x="1.5" y="8.5" width="4" height="4"/><rect x="1.5" y="15.5" width="4" height="4"/><rect x="9.5" y="8.5" width="4" height="4"/></g><path d="M3.5 5.5 V8.5 M3.5 12.5 V15.5 M5.5 10.5 H9.5" stroke="#444" stroke-width="1"/></svg>
<svg style="left:38px;top:178px" width="22" height="21"><g stroke="#c8a868" stroke-width="0.9"><path d="M1 4 Q1 1 4 1 H8 Q10 1 10 3 H12 V12 H1 Z" fill="#f8ecc8"/><path d="M4 8 Q4 5 7 5 H11 Q13 5 13 7 H15 V16 H4 Z" fill="#f8ecc8"/><path d="M7 12 Q7 9 10 9 H14 Q16 9 16 11 H19 V20 H7 Z" fill="#faf0d0"/></g></svg>
<svg style="left:68px;top:180px" width="19" height="16"><path d="M1 3 Q1 1 3 1 H7 Q9 1 9 3 H18 V15 H1 Z" fill="#faefcc" stroke="#c8a868"/><g stroke="#1a5a90" stroke-width="1.3"><path d="M9.5 5 V12 M6 8.5 H13 M7 6 L12 11 M12 6 L7 11"/></g></svg>
<svg style="left:100px;top:180px" width="17" height="17"><rect x="0.5" y="0.5" width="16" height="16" fill="#fff" stroke="#0a1a70"/><rect x="2" y="2" width="13" height="13" fill="#102a90"/><path d="M4 3.5 H9 V5.5 H6 V7.5 H8.5 V9.5 H6 V13.5 H4 Z" fill="#fff"/><g fill="#8ab0e8"><rect x="10" y="4" width="4" height="1.3"/><rect x="10" y="8" width="4" height="1.3"/><rect x="10" y="12" width="4" height="1.3"/></g></svg>

<!-- graphics -->
<svg width="921" height="781" style="left:0;top:0" viewBox="0 0 921 781">
<polygon points="464.4,228 785,229.3 867.4,501.5 742.5,706 422.5,706 340,433" fill="#e1e1e1"/>
<g stroke="#000" stroke-width="2" fill="none" stroke-linejoin="miter">
<polygon points="464.4,228 785,229.3 867.4,501.5 742.5,706 422.5,706 340,433"/>
<line x1="340" y1="433" x2="660.6" y2="434"/>
<line x1="660.6" y1="434" x2="785" y2="229.3"/>
<line x1="660.6" y1="434" x2="742.5" y2="706"/>
<line x1="464.4" y1="228" x2="546.6" y2="501"/>
<line x1="546.6" y1="501" x2="867.4" y2="501.5"/>
<line x1="546.6" y1="501" x2="422.5" y2="706"/>
</g>
</svg>


<!-- model + axes -->
<svg width="921" height="781" style="left:0;top:0">
<ellipse cx="0" cy="0" rx="27" ry="13" transform="translate(607 481) rotate(-22)" fill="#cbcbc4" stroke="#b4b4ac" stroke-width="1"/>
<ellipse cx="0" cy="0" rx="20" ry="9" transform="translate(604 484) rotate(-18)" fill="#bdbdb6"/>
<path d="M587 468 V486 Q600 494 614 484 V466 Z" fill="#9c9c9c"/>
<rect x="588.5" y="482.6" width="1.3" height="1.3" fill="#666"/><rect x="589.4" y="482.8" width="1.3" height="1.3" fill="#777"/><rect x="596.5" y="486.8" width="1.3" height="1.3" fill="#d0d0d0"/><rect x="605.7" y="474.3" width="1.3" height="1.3" fill="#e8e8e8"/><rect x="610.9" y="474.3" width="1.3" height="1.3" fill="#d0d0d0"/><rect x="594.0" y="480.4" width="1.3" height="1.3" fill="#d0d0d0"/><rect x="592.3" y="476.6" width="1.3" height="1.3" fill="#d0d0d0"/><rect x="608.3" y="477.7" width="1.3" height="1.3" fill="#777"/><rect x="590.5" y="485.4" width="1.3" height="1.3" fill="#666"/><rect x="595.4" y="477.1" width="1.3" height="1.3" fill="#d0d0d0"/><rect x="593.7" y="476.6" width="1.3" height="1.3" fill="#777"/><rect x="603.6" y="475.4" width="1.3" height="1.3" fill="#d0d0d0"/><rect x="610.8" y="483.4" width="1.3" height="1.3" fill="#666"/><rect x="598.5" y="486.0" width="1.3" height="1.3" fill="#666"/>
<path d="M583 452 V470 Q600 480 617 468 V452 Z" fill="#67676f"/>
<path d="M584 462 Q600 470 616 461" fill="none" stroke="#d8d8d8" stroke-width="0.9" stroke-dasharray="3 2"/>
<path d="M585 474 Q600 481 614 473" fill="none" stroke="#e0e0e0" stroke-width="0.9" stroke-dasharray="3 2"/>
<ellipse cx="600" cy="452" rx="17" ry="9" fill="#5c5c66"/>
<rect x="600.8" y="457.9" width="1.2" height="1.2" fill="#444450"/><rect x="608.9" y="449.2" width="1.2" height="1.2" fill="#8a8a94"/><rect x="588.7" y="447.3" width="1.2" height="1.2" fill="#7a7a84"/><rect x="599.6" y="455.9" width="1.2" height="1.2" fill="#7a7a84"/><rect x="589.2" y="450.5" width="1.2" height="1.2" fill="#7a7a84"/><rect x="596.3" y="449.6" width="1.2" height="1.2" fill="#9a9aa4"/><rect x="607.3" y="447.7" width="1.2" height="1.2" fill="#8a8a94"/><rect x="598.2" y="450.2" width="1.2" height="1.2" fill="#8a8a94"/><rect x="599.2" y="453.3" width="1.2" height="1.2" fill="#444450"/><rect x="587.5" y="453.2" width="1.2" height="1.2" fill="#7a7a84"/><rect x="596.8" y="444.5" width="1.2" height="1.2" fill="#7a7a84"/><rect x="598.4" y="446.0" width="1.2" height="1.2" fill="#9a9aa4"/><rect x="603.4" y="450.3" width="1.2" height="1.2" fill="#9a9aa4"/><rect x="592.4" y="452.1" width="1.2" height="1.2" fill="#7a7a84"/><rect x="602.5" y="444.7" width="1.2" height="1.2" fill="#7a7a84"/><rect x="590.7" y="451.8" width="1.2" height="1.2" fill="#444450"/><rect x="590.6" y="450.9" width="1.2" height="1.2" fill="#9a9aa4"/><rect x="610.2" y="448.3" width="1.2" height="1.2" fill="#8a8a94"/><rect x="609.3" y="445.8" width="1.2" height="1.2" fill="#9a9aa4"/><rect x="597.3" y="447.7" width="1.2" height="1.2" fill="#8a8a94"/><rect x="598.4" y="448.4" width="1.2" height="1.2" fill="#444450"/><rect x="599.2" y="454.0" width="1.2" height="1.2" fill="#7a7a84"/><rect x="611.4" y="455.8" width="1.2" height="1.2" fill="#7a7a84"/><rect x="601.7" y="451.3" width="1.2" height="1.2" fill="#7a7a84"/><rect x="601.7" y="444.6" width="1.2" height="1.2" fill="#8a8a94"/><rect x="589.7" y="447.7" width="1.2" height="1.2" fill="#7a7a84"/><rect x="598.3" y="447.5" width="1.2" height="1.2" fill="#444450"/><rect x="585.0" y="451.7" width="1.2" height="1.2" fill="#444450"/><rect x="604.9" y="452.1" width="1.2" height="1.2" fill="#8a8a94"/><rect x="614.0" y="449.5" width="1.2" height="1.2" fill="#444450"/><rect x="595.4" y="450.0" width="1.2" height="1.2" fill="#8a8a94"/><rect x="608.7" y="451.4" width="1.2" height="1.2" fill="#444450"/><rect x="613.7" y="450.1" width="1.2" height="1.2" fill="#7a7a84"/><rect x="590.0" y="457.2" width="1.2" height="1.2" fill="#7a7a84"/><rect x="592.8" y="447.1" width="1.2" height="1.2" fill="#8a8a94"/><rect x="589.4" y="446.7" width="1.2" height="1.2" fill="#444450"/><rect x="588.4" y="454.8" width="1.2" height="1.2" fill="#9a9aa4"/><rect x="609.1" y="449.9" width="1.2" height="1.2" fill="#444450"/><rect x="589.0" y="451.2" width="1.2" height="1.2" fill="#8a8a94"/><rect x="603.6" y="444.3" width="1.2" height="1.2" fill="#444450"/>
<g stroke="#1a7a1a" stroke-width="1.5">
<line x1="607.5" y1="479" x2="597" y2="448"/>
<line x1="607.5" y1="479" x2="620" y2="459"/>
<line x1="607.5" y1="479" x2="642" y2="480"/>
</g>
<path d="M595.5 439 L591 452 L601.5 450 Z" fill="#1a8a1a"/>
<path d="M625 451 L615 458 L623.5 463 Z" fill="#2aa02a"/>
<path d="M652 480.5 L639 475.5 L640 486 Z" fill="#1a8a1a"/>
<g font-family="Liberation Sans" font-size="10.5" fill="#2a4a2a"><text x="597.5" y="437">Z</text><text x="626.5" y="449">Y</text><text x="654.5" y="478">X</text></g>
</svg>
<!-- watermark -->
<svg style="left:755px;top:723px" width="40" height="33"><g fill="#fff" stroke="#999" stroke-width="0.9"><path d="M15 2 C7 2 2 7 2 13 C2 16 3.5 18.5 6 20.5 L5 24.5 L9.5 22 C11 22.6 13 23 15 23 C23 23 28 18 28 12.5 C28 7 23 2 15 2 Z"/><path d="M24 11 C17.5 11 13 15 13 20 C13 25 17.5 29 24 29 C25.5 29 27 28.8 28 28.4 L32 30.5 L31 27 C33.5 25.3 35 22.8 35 20 C35 15 30.5 11 24 11 Z"/></g><g fill="#999"><circle cx="10" cy="9.5" r="1.3"/><circle cx="19" cy="9.5" r="1.3"/><circle cx="20" cy="18" r="1.2"/><circle cx="28" cy="18" r="1.2"/></g></svg>
<div class="a" style="left:800px;top:728px;font-size:22px;line-height:26px;color:#fcfcfc;white-space:nowrap;text-shadow:1px 1px 0 #7a7a7a,-0.5px -0.5px 0 #aaa;letter-spacing:1px">逐流往仿</div>

</body></html>
